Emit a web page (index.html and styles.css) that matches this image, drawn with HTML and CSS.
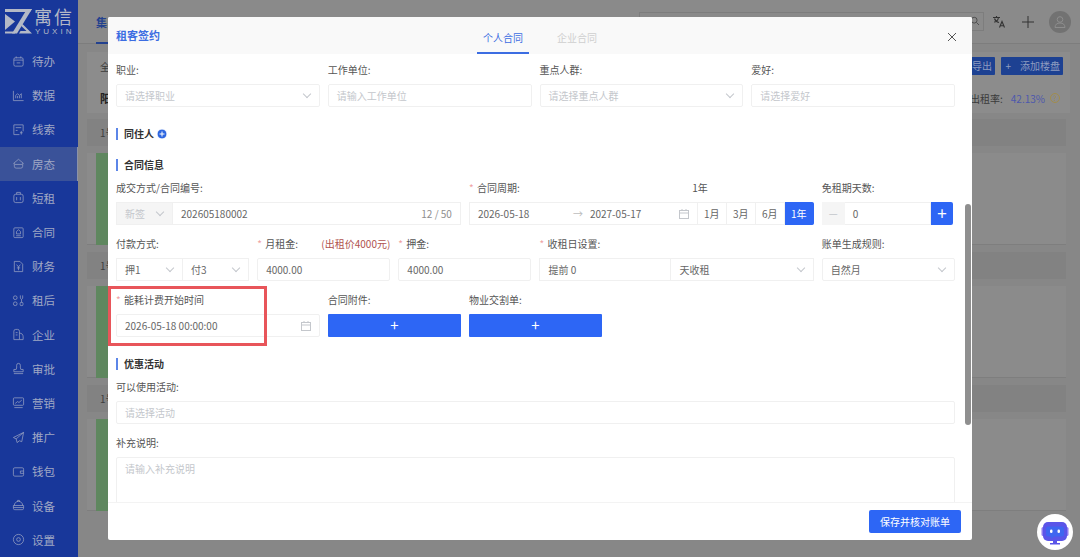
FILE: index.html
```html
<!DOCTYPE html>
<html lang="zh-CN">
<head>
    <meta charset="UTF-8">
    <title>租客签约</title>
    <link rel="stylesheet" href="styles.css">
</head>
<body>

<div class="app">
    <aside class="sidebar">
        <div class="logo">
            <svg class="logo-mark" viewBox="0 0 27 25">
                <path d="M0 0H27L25 3H0z"/>
                <path d="M0 5L10 12.500L0 21z"/>
                <path d="M27 0L12 24.500H7L22 0z"/>
                <path d="M0 22.500H10V24.500H0z"/>
                <path d="M17.500 15L27 24.500H14L15.500 22H21.500L16 16.800z"/>
            </svg>
            <div class="logo-text">
                <div class="logo-name">寓信</div>
                <div class="logo-sub">YUXIN</div>
            </div>
        </div>
        <nav class="menu">
            <a class="menu-item">
                <svg class="menu-icon" viewBox="0 0 14 14"><rect x="2" y="3" width="10" height="9" rx="1.500"/><path d="M4.500 1.500v2M9.500 1.500v2M2 5.500h10M5 8.500h4"/></svg>
                <span>待办</span>
            </a>
            <a class="menu-item">
                <svg class="menu-icon" viewBox="0 0 14 14"><path d="M1.500 2v10.500h11M4 10V7l2-2 2 2 2-2v5M6 10V7.500M8 10V7.500"/></svg>
                <span>数据</span>
            </a>
            <a class="menu-item">
                <svg class="menu-icon" viewBox="0 0 14 14"><path d="M8 12.500H2V2h10v7M4 5h6M4 8h2M10 8.500v4M8.500 10.500h3"/></svg>
                <span>线索</span>
            </a>
            <a class="menu-item active">
                <svg class="menu-icon" viewBox="0 0 14 14"><path d="M1.500 7L7 2.500 12.500 7M2.500 6.500V10a2 2 0 0 0 2 2h5a2 2 0 0 0 2-2V6.500M3 8h8"/></svg>
                <span>房态</span>
            </a>
            <a class="menu-item">
                <svg class="menu-icon" viewBox="0 0 14 14"><rect x="2" y="3.500" width="10" height="9" rx="2"/><path d="M5 3.500V1.500h4v2M5 6.500v3.500M9 6.500v3.500"/></svg>
                <span>短租</span>
            </a>
            <a class="menu-item">
                <svg class="menu-icon" viewBox="0 0 14 14"><rect x="2" y="2" width="10" height="10.500" rx="1"/><path d="M7 4L4.800 6v2.500h4.400V6zM4.500 10.500h5"/></svg>
                <span>合同</span>
            </a>
            <a class="menu-item">
                <svg class="menu-icon" viewBox="0 0 14 14"><path d="M2.500 1.500h6l3 3v8h-9zM5 5l2 2.500L9 5M7 7.500V11M5.200 8.500h3.600"/></svg>
                <span>财务</span>
            </a>
            <a class="menu-item">
                <svg class="menu-icon" viewBox="0 0 14 14"><circle cx="3.500" cy="4" r="2"/><circle cx="3.500" cy="10.500" r="2"/><path d="M9 1.500v3l1.200 1.500 1.300-1.500v-3M10.300 6v3"/><rect x="8.800" y="9" width="3" height="3.500" rx="1"/></svg>
                <span>租后</span>
            </a>
            <a class="menu-item">
                <svg class="menu-icon" viewBox="0 0 14 14"><path d="M2 12.500V3.500a2 2 0 0 1 2-2h2a2 2 0 0 1 2 2v9zM8 5.500c2.500 0 4 1.500 4 4v3h-4M4 5h2M4 7.500h2"/></svg>
                <span>企业</span>
            </a>
            <a class="menu-item">
                <svg class="menu-icon" viewBox="0 0 14 14"><path d="M5 6.500V3.500a2 2 0 0 1 4 0v3L9.500 8H12v2.500H2V8h2.500zM2 12.500h10"/></svg>
                <span>审批</span>
            </a>
            <a class="menu-item">
                <svg class="menu-icon" viewBox="0 0 14 14"><rect x="1.500" y="2" width="11" height="8" rx="1"/><path d="M3.500 8l2.500-2 1.500 1 3-2.500M2.500 12.500h9"/></svg>
                <span>营销</span>
            </a>
            <a class="menu-item">
                <svg class="menu-icon" viewBox="0 0 14 14"><path d="M12.500 1.500L1.500 7l3 1.500 1 4 2.500-2 2.500 1zM12.500 1.500L4.500 8.500"/></svg>
                <span>推广</span>
            </a>
            <a class="menu-item">
                <svg class="menu-icon" viewBox="0 0 14 14"><rect x="1.500" y="3" width="11" height="9" rx="1.500"/><path d="M12.500 6.500H9v2.500h3.500"/></svg>
                <span>钱包</span>
            </a>
            <a class="menu-item">
                <svg class="menu-icon" viewBox="0 0 14 14"><path d="M2.500 7a4.500 4.500 0 0 1 9 0M1.500 7h11v3a1.500 1.500 0 0 1-1.500 1.500H3A1.500 1.500 0 0 1 1.500 10zM6 3V1.500h2V3M1.500 9.200h11"/></svg>
                <span>设备</span>
            </a>
            <a class="menu-item">
                <svg class="menu-icon" viewBox="0 0 14 14"><circle cx="7" cy="7" r="5.500"/><circle cx="7" cy="7" r="2"/></svg>
                <span>设置</span>
            </a>
        </nav>
    </aside>

    <main class="main">
        <header class="topbar">
            <div class="top-tab">集</div>
            <div class="top-tools">
                <div class="search-box">
                    <svg class="search-icon" viewBox="0 0 12 12"><circle cx="5" cy="5" r="3.500"/><path d="M7.800 7.800l3 3"/></svg>
                </div>
                <svg class="translate-icon" viewBox="0 0 14 14"><path d="M1 2.500h7M4.500 1v1.500M2 7c2 0 4-2 4.500-4.500M2.500 3.500C3 5.500 5 7 7 7.500M7.500 12.500l2.500-6 2.500 6M8.300 10.800h3.400"/></svg>
                <svg class="plus-icon" viewBox="0 0 12 12"><path d="M6 0v12M0 6h12"/></svg>
                <div class="avatar">
                    <svg viewBox="0 0 14 14"><circle cx="7" cy="4.500" r="2.800"/><path d="M2 12.500c0-3 2-4.500 5-4.500s5 1.500 5 4.500z"/></svg>
                </div>
            </div>
        </header>

        <section class="toolbar">
            <div class="toolbar-row">
                <span>全</span>
                <div class="toolbar-btns">
                    <span class="tool-btn btn-export">导出</span>
                    <span class="tool-btn btn-add"><i class="btn-plus">+</i>添加楼盘</span>
                </div>
            </div>
            <div class="toolbar-row toolbar-second">
                <strong>阳</strong>
                <div class="rate">
                    <span>出租率:</span>
                    <span class="rate-num">42.13%</span>
                    <span class="rate-help">?</span>
                </div>
            </div>
        </section>

        <section class="floor">
            <div class="floor-head">1号</div>
            <div class="floor-body"><div class="room-tile"></div></div>
        </section>
        <section class="floor">
            <div class="floor-head">1号</div>
            <div class="floor-body"><div class="room-tile"></div></div>
        </section>
        <section class="floor">
            <div class="floor-head">1号</div>
            <div class="floor-body"><div class="room-tile"></div></div>
        </section>
    </main>
</div>

<div class="modal">
    <div class="modal-head">
        <div class="modal-title">租客签约</div>
        <div class="modal-tabs">
            <span class="modal-tab on">个人合同</span>
            <span class="modal-tab">企业合同</span>
        </div>
        <svg class="modal-close" viewBox="0 0 10 10"><path d="M1 1l8 8M9 1l-8 8"/></svg>
    </div>

    <div class="modal-body">
        <div class="form-row">
            <div class="field span-3">
                <label class="field-label">职业:</label>
                <div class="input"><span class="holder">请选择职业</span><i class="chevron"></i></div>
            </div>
            <div class="field span-3">
                <label class="field-label">工作单位:</label>
                <div class="input"><span class="holder">请输入工作单位</span></div>
            </div>
            <div class="field span-3">
                <label class="field-label">重点人群:</label>
                <div class="input"><span class="holder">请选择重点人群</span><i class="chevron"></i></div>
            </div>
            <div class="field span-3">
                <label class="field-label">爱好:</label>
                <div class="input"><span class="holder">请选择爱好</span></div>
            </div>
        </div>

        <div class="section-title">同住人
            <svg class="add-circle" viewBox="0 0 10 10"><circle cx="5" cy="5" r="5"/><path d="M2.500 5h5M5 2.500v5"/></svg>
        </div>
        <div class="section-title">合同信息</div>

        <div class="form-row">
            <div class="field span-5">
                <label class="field-label">成交方式/合同编号:</label>
                <div class="input-group">
                    <div class="input deal-type"><span class="holder">新签</span><i class="chevron"></i></div>
                    <div class="input grow"><span>202605180002</span><span class="count">12 / 50</span></div>
                </div>
            </div>
            <div class="field span-5">
                <label class="field-label"><b class="star">*</b>合同周期:<span class="term-years">1年</span></label>
                <div class="input-group">
                    <div class="input grow date-range">
                        <span class="date-from">2026-05-18</span>
                        <span class="date-arrow">→</span>
                        <span>2027-05-17</span>
                        <svg class="calendar" viewBox="0 0 10 10"><rect x="0.500" y="1.500" width="9" height="8"/><path d="M0.500 4h9M3 0v2M7 0v2"/></svg>
                    </div>
                    <span class="term-btn">1月</span>
                    <span class="term-btn">3月</span>
                    <span class="term-btn">6月</span>
                    <span class="term-btn on">1年</span>
                </div>
            </div>
            <div class="field span-2">
                <label class="field-label">免租期天数:</label>
                <div class="input-group stepper">
                    <span class="step-minus">—</span>
                    <div class="input grow"><span>0</span></div>
                    <span class="step-plus">+</span>
                </div>
            </div>
        </div>

        <div class="form-row">
            <div class="field span-2">
                <label class="field-label">付款方式:</label>
                <div class="input-group">
                    <div class="input half"><span>押1</span><i class="chevron"></i></div>
                    <div class="input half"><span>付3</span><i class="chevron"></i></div>
                </div>
            </div>
            <div class="field span-2">
                <label class="field-label"><b class="star">*</b>月租金:<span class="rent-hint">(出租价4000元)</span></label>
                <div class="input"><span>4000.00</span></div>
            </div>
            <div class="field span-2">
                <label class="field-label"><b class="star">*</b>押金:</label>
                <div class="input"><span>4000.00</span></div>
            </div>
            <div class="field span-4">
                <label class="field-label"><b class="star">*</b>收租日设置:</label>
                <div class="input-group">
                    <div class="input rent-lead"><span>提前 0</span></div>
                    <div class="input half"><span>天收租</span><i class="chevron"></i></div>
                </div>
            </div>
            <div class="field span-2">
                <label class="field-label">账单生成规则:</label>
                <div class="input"><span>自然月</span><i class="chevron"></i></div>
            </div>
        </div>

        <div class="form-row">
            <div class="field span-3">
                <label class="field-label"><b class="star">*</b>能耗计费开始时间</label>
                <div class="input">
                    <span>2026-05-18 00:00:00</span>
                    <svg class="calendar" viewBox="0 0 10 10"><rect x="0.500" y="1.500" width="9" height="8"/><path d="M0.500 4h9M3 0v2M7 0v2"/></svg>
                </div>
            </div>
            <div class="field span-2">
                <label class="field-label">合同附件:</label>
                <div class="upload-btn">+</div>
            </div>
            <div class="field span-2">
                <label class="field-label">物业交割单:</label>
                <div class="upload-btn">+</div>
            </div>
        </div>

        <div class="section-title">优惠活动</div>

        <div class="form-row">
            <div class="field span-12">
                <label class="field-label">可以使用活动:</label>
                <div class="input"><span class="holder">请选择活动</span></div>
            </div>
        </div>
        <div class="form-row">
            <div class="field span-12">
                <label class="field-label">补充说明:</label>
                <div class="textarea"><span class="holder">请输入补充说明</span></div>
            </div>
        </div>
    </div>

    <div class="scroll-thumb"></div>

    <div class="modal-foot">
        <span class="save-btn">保存并核对账单</span>
    </div>
</div>

<div class="mark-box"></div>

<div class="chat-bot">
    <svg viewBox="0 0 36 36">
        <rect x="4.500" y="13" width="3" height="9" rx="1.500" fill="#8f7bf0"/>
        <rect x="28.500" y="13" width="3" height="9" rx="1.500" fill="#8f7bf0"/>
        <rect x="6" y="8" width="24" height="19" rx="5" fill="#5b55e8"/>
        <path d="M11 12.500h14a2 2 0 0 1 2 2v6a2 2 0 0 1-2 2h-8l-3 2.500v-2.500h-3a2 2 0 0 1-2-2v-6a2 2 0 0 1 2-2z" fill="#3f66f0"/>
        <rect x="13" y="15.500" width="2.500" height="3.500" rx="1.200" fill="#fff"/>
        <rect x="20.500" y="15.500" width="2.500" height="3.500" rx="1.200" fill="#fff"/>
        <path d="M16 27h4v2h3v1.500H13V29h3z" fill="#5b55e8"/>
    </svg>
</div>

</body>
</html>
```

FILE: styles.css
```css
* {
    box-sizing: border-box;
}
body {
    margin: 0;
    width: 1080px;
    height: 557px;
    overflow: hidden;
    font-family: "Noto Sans CJK SC", "Noto Sans", sans-serif;
    font-size: 10px;
    color: #5a5a5a;
    background-color: #7f7f7f;
    position: relative;
}
.app {
    display: flex;
    height: 557px;
}

/* sidebar */
.sidebar {
    width: 78px;
    flex: none;
    background-color: #18379a;
}
.logo {
    height: 44px;
    display: flex;
    gap: 2px;
    padding: 9px 0 0 5px;
    color: #b4b9c6;
}
.logo-mark {
    width: 27px;
    height: 25px;
    fill: #b4b9c6;
}
.logo-name {
    font-size: 18px;
    line-height: 18px;
    letter-spacing: 2px;
    margin-top: -2px;
    margin-bottom: 3px;
}
.logo-sub {
    font-size: 8px;
    line-height: 8px;
    letter-spacing: 3px;
    margin-left: 1px;
    font-family: "Liberation Sans", sans-serif;
}
.menu-item {
    height: 34.2px;
    display: flex;
    align-items: center;
    gap: 7px;
    padding-left: 12px;
    font-size: 11.5px;
    color: #a0a8c4;
}
.menu-item.active {
    background-color: #3a5299;
    border-right: 1px solid #8b93a8;
}
.menu-icon {
    width: 13px;
    height: 13px;
    fill: none;
    stroke: #98a2c2;
    stroke-width: 0.800;
}

/* page behind the dialog */
.main {
    flex: 1;
    min-width: 0;
    background-color: #878787;
}
.topbar {
    height: 44px;
    display: flex;
    justify-content: space-between;
    padding: 0 9px 0 18px;
    background-color: #8a8a8a;
    border-bottom: 1px solid #7d7d7d;
}
.top-tab {
    color: #23418f;
    font-weight: 700;
    line-height: 44px;
    height: 44px;
    width: 44px;
    font-size: 11px;
    border-bottom: 2px solid #23418f;
}
.top-tools {
    display: flex;
    align-items: center;
    gap: 8px;
}
.search-box {
    width: 345px;
    height: 19px;
    margin-top: -1px;
    border: 1px solid #7d7d7d;
    display: flex;
    justify-content: flex-end;
    align-items: center;
    padding-right: 3px;
}
.search-icon {
    width: 10px;
    height: 10px;
    fill: none;
    stroke: #444;
}
.translate-icon {
    width: 14px;
    height: 14px;
    fill: none;
    stroke: #333;
    stroke-width: 1.100;
}
.plus-icon {
    width: 12px;
    height: 12px;
    margin: 0 7px 0 8px;
    fill: none;
    stroke: #333;
}
.avatar {
    width: 22px;
    height: 22px;
    border-radius: 50%;
    background-color: #727272;
    padding: 4px;
}
.avatar svg {
    display: block;
    fill: none;
    stroke: #8e8e8e;
}
.toolbar {
    margin: 8px 10px 0 9px;
    height: 61px;
    padding: 0 7px 0 13px;
    background-color: #8c8c8c;
    color: #3b3b3b;
}
.toolbar-row {
    display: flex;
    justify-content: space-between;
    align-items: center;
    height: 28px;
}
.toolbar-second {
    height: 36px;
}
.toolbar-second strong {
    font-size: 11px;
    color: #222;
}
.toolbar-btns {
    display: flex;
    gap: 6px;
}
.tool-btn {
    height: 18px;
    line-height: 18px;
    background-color: #1d4192;
    color: #8e9cc0;
    border-radius: 1px;
    font-size: 10px;
    padding: 0 3px;
    text-align: right;
    white-space: nowrap;
}
.btn-export {
    width: 40px;
}
.btn-add {
    width: 62px;
}
.btn-plus {
    font-style: normal;
    margin-right: 9px;
}
.rate {
    display: flex;
    align-items: center;
    gap: 5px;
    padding-right: 3px;
    color: #3a3a3a;
}
.rate-num {
    color: #4c58ac;
    margin-left: 3px;
}
.rate-help {
    width: 10px;
    height: 10px;
    border: 1px solid #a28d4c;
    border-radius: 50%;
    font-size: 7px;
    line-height: 8px;
    text-align: center;
    color: #a28d4c;
}
.floor {
    margin: 6px 14px 0 9px;
    height: 127px;
}
.floor-head {
    height: 27px;
    line-height: 27px;
    padding-left: 13px;
    background-color: #828282;
    color: #3e3e3e;
}
.floor-body {
    margin-top: 7px;
    height: 92px;
    background-color: #8b8b8b;
    padding-left: 9px;
    border-bottom: 1px solid #7e7e7e;
}
.room-tile {
    width: 120px;
    height: 92px;
    background-color: #5f875f;
}

/* dialog */
.modal {
    position: absolute;
    left: 108px;
    top: 17px;
    width: 864px;
    height: 523px;
    background-color: #fff;
    border-radius: 2px;
    overflow: hidden;
    display: flex;
    flex-direction: column;
}
.modal-head {
    height: 37px;
    flex: none;
    display: flex;
    justify-content: center;
    background-color: #f9f9f9;
    position: relative;
}
.modal-title {
    position: absolute;
    left: 8px;
    top: 10px;
    font-size: 11px;
    line-height: 16px;
    font-weight: 700;
    color: #3c6de2;
}
.modal-tabs {
    display: flex;
    gap: 22px;
}
.modal-tab {
    width: 52px;
    height: 37px;
    line-height: 42px;
    text-align: center;
    color: #cfcfcf;
}
.modal-tab.on {
    color: #3c6de2;
    border-bottom: 2px solid #3c6de2;
}
.modal-close {
    position: absolute;
    right: 15px;
    top: 15px;
    width: 10px;
    height: 10px;
    fill: none;
    stroke: #555;
}
.modal-body {
    flex: 1;
    min-height: 0;
    overflow: hidden;
    padding: 6px 17px 0 8px;
    display: flex;
    flex-direction: column;
}
.modal-foot {
    height: 38px;
    flex: none;
    border-top: 1px solid #f3f3f3;
    display: flex;
    justify-content: flex-end;
    align-items: center;
    padding-right: 11px;
}
.save-btn {
    width: 92px;
    height: 23px;
    line-height: 23px;
    text-align: center;
    background-color: #2d66f5;
    color: #fff;
    border-radius: 2px;
}
.scroll-thumb {
    position: absolute;
    right: 1px;
    top: 187px;
    width: 6px;
    height: 221px;
    border-radius: 3px;
    background-color: #8f8f8f;
}

/* form */
.form-row {
    display: grid;
    grid-template-columns: repeat(12, 1fr);
    column-gap: 8px;
    margin-bottom: 9px;
    flex: none;
}
.span-2 { grid-column: span 2; }
.span-3 { grid-column: span 3; }
.span-4 { grid-column: span 4; }
.span-5 { grid-column: span 5; }
.span-12 { grid-column: span 12; }
.field-label {
    display: flex;
    height: 20px;
    line-height: 20px;
    margin-bottom: 4px;
    color: #555;
    white-space: nowrap;
}
.star {
    color: #f0a3a3;
    font-weight: 400;
    width: 8px;
}
.term-years {
    margin-left: auto;
    margin-right: 106px;
}
.rent-hint {
    margin-left: auto;
    color: #b0524e;
}
.section-title {
    flex: none;
    height: 16px;
    line-height: 16px;
    margin: 10px 0 5px;
    font-weight: 700;
    color: #333;
    display: flex;
    align-items: center;
    gap: 3px;
}
.section-title::before {
    content: "";
    width: 2px;
    height: 12px;
    margin-right: 3px;
    background-color: #5c86e8;
}
.add-circle {
    width: 10px;
    height: 10px;
    fill: #2d66e0;
    stroke: #fff;
}
.input {
    height: 23px;
    display: flex;
    align-items: center;
    padding: 0 8px;
    border: 1px solid #f0f0f0;
    border-radius: 2px;
    position: relative;
    color: #666;
}
.holder {
    color: #c4c7cc;
}
.chevron {
    position: absolute;
    right: 9px;
    top: 6px;
    width: 6px;
    height: 6px;
    border-right: 1px solid #c4c7cc;
    border-bottom: 1px solid #c4c7cc;
    transform: rotate(45deg);
}
.input-group {
    display: flex;
    height: 23px;
}
.input-group .input {
    border-radius: 0;
}
.input-group .input + .input {
    border-left: none;
}
.grow {
    flex: 1;
    min-width: 0;
}
.half {
    flex: 1;
    min-width: 0;
}
.rent-lead {
    width: 132px;
    flex: none;
}
.deal-type {
    width: 57px;
    flex: none;
    background-color: #f5f5f5;
}
.count {
    margin-left: auto;
    color: #8e8e8e;
}
.date-from {
    width: 95px;
}
.date-arrow {
    color: #bdbdbd;
    width: 17px;
}
.calendar {
    position: absolute;
    right: 8px;
    top: 6px;
    width: 10px;
    height: 10px;
    fill: none;
    stroke: #c4c7cc;
}
.term-btn {
    width: 29px;
    flex: none;
    line-height: 21px;
    text-align: center;
    color: #666;
    border: 1px solid #f0f0f0;
    border-left: none;
}
.term-btn.on {
    background-color: #2d66f5;
    border-color: #2d66f5;
    color: #fff;
    border-radius: 0 2px 2px 0;
}
.stepper {
    margin-right: 2px;
}
.stepper .input {
    border-left: none;
}
.step-minus {
    width: 23px;
    flex: none;
    text-align: center;
    line-height: 22px;
    color: #c4c7cc;
    background-color: #f5f5f5;
}
.step-plus {
    width: 22px;
    flex: none;
    text-align: center;
    line-height: 21px;
    font-size: 17px;
    color: #fff;
    background-color: #2d66f5;
    border-radius: 0 2px 2px 0;
}
.upload-btn {
    height: 23px;
    line-height: 21px;
    text-align: center;
    font-size: 15px;
    color: #fff;
    background-color: #2d66f5;
    border-radius: 1px;
}
.textarea {
    height: 80px;
    padding: 3px 8px;
    border: 1px solid #f0f0f0;
    border-radius: 2px;
    line-height: 16px;
}

/* things laid over the dialog */
.mark-box {
    position: absolute;
    left: 108px;
    top: 286px;
    width: 159px;
    height: 60px;
    border: 3px solid #e8555a;
}
.chat-bot {
    position: absolute;
    left: 1037px;
    top: 514px;
    width: 36px;
    height: 36px;
    border-radius: 50%;
    background-color: #fff;
}
.chat-bot svg {
    display: block;
}
```
